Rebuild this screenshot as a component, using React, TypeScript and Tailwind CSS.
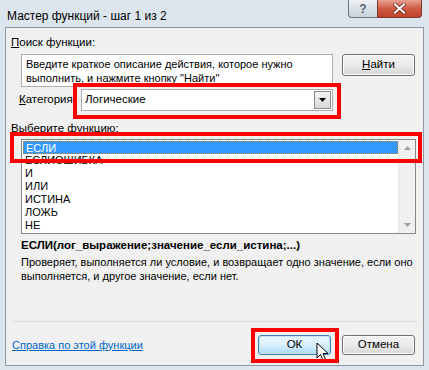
import React from "react";

const items = ["ЕСЛИ", "ЕСЛИОШИБКА", "И", "ИЛИ", "ИСТИНА", "ЛОЖЬ", "НЕ"];

function WinButton({ children, className = "" }: { children: React.ReactNode; className?: string }) {
  return (
    <div
      className={
        "flex items-center justify-center rounded-[3px] border border-[#707070] bg-gradient-to-b from-[#f2f2f2] via-[#ebebeb] to-[#d6d6d6] text-black shadow-[inset_0_0_0_1px_#fcfcfc] " +
        className
      }
    >
      {children}
    </div>
  );
}

export default function App() {
  return (
    <div
      className="relative w-[429px] h-[370px] overflow-hidden bg-[#dce4ed] text-[11.5px] text-black"
      style={{ fontFamily: '"Liberation Sans", Arial, sans-serif' }}
    >
      {/* title bar */}
      <div className="flex h-[27px] items-start">
        <div className="pl-[7px] pt-[7px] text-[12px] text-black">Мастер функций - шаг 1 из 2</div>
        <div className="ml-auto mr-[7px] flex">
          <div className="flex h-[18px] w-[29px] items-center justify-center rounded-bl-[4px] border border-r-0 border-t-0 border-[#6d7580] bg-gradient-to-b from-[#eef1f5] to-[#c9d1dc] text-[12px] font-bold text-[#5a6470]">
            ?
          </div>
          <div className="flex h-[18px] w-[45px] items-center justify-center rounded-br-[4px] border border-t-0 border-[#7a3a30] bg-gradient-to-b from-[#e8a191] via-[#cf5a42] to-[#c24128]">
            <svg width="13" height="11" viewBox="0 0 13 11">
              <path d="M2 1.5 L11 9.5 M11 1.5 L2 9.5" stroke="#5a1c12" strokeWidth="3.6" strokeLinecap="square" />
              <path d="M2 1.5 L11 9.5 M11 1.5 L2 9.5" stroke="#ffffff" strokeWidth="2.2" strokeLinecap="square" />
            </svg>
          </div>
        </div>
      </div>

      {/* client area */}
      <div className="mx-[5px] flex h-[339px] flex-col border border-[#8d98a4] bg-[#f0f0f0]">
        <div className="pl-[5px] pt-[7px] leading-[14px]">
          <span className="underline">П</span>оиск функции:
        </div>

        <div className="mt-[5px] flex items-start pl-[15px]">
          <div className="h-[33px] w-[312px] border border-[#abadb3] bg-white px-[4px] pt-[2px] text-[11px] leading-[14px]">
            Введите краткое описание действия, которое нужно выполнить, и нажмите кнопку "Найти"
          </div>
          <WinButton className="ml-[9px] h-[22px] w-[73px]">
            <span>
              <span className="underline">Н</span>айти
            </span>
          </WinButton>
        </div>

        <div className="mt-[2px] flex items-center pl-[13px]">
          <div className="w-[62px]">
            <span className="underline">К</span>атегория:
          </div>
          <div className="flex h-[22px] w-[252px] items-center border border-[#abadb3] bg-white pl-[3px]">
            <span>Логические</span>
            <div className="ml-auto mr-[1px] flex h-[18px] w-[17px] items-center justify-center border border-[#8b8b8b] bg-gradient-to-b from-[#f3f3f3] to-[#d8d8d8]">
              <svg width="7" height="4" viewBox="0 0 7 4">
                <path d="M0 0 H7 L3.5 4 Z" fill="#000" />
              </svg>
            </div>
          </div>
        </div>

        <div className="mt-[10px] pl-[5px] leading-[14px]">
          <span className="underline">В</span>ыберите функцию:
        </div>

        <div className="ml-[15px] mt-[4px] flex h-[95px] w-[395px] border border-[#828790] bg-white">
          <div className="flex-1 pl-[1px] pt-[1px] text-[11px]">
            {items.map((it, i) => (
              <div
                key={it}
                className={
                  "h-[13px] pl-[2px] leading-[13px] " +
                  (i === 0 ? "border border-dotted border-[#c08040] bg-[#3399ff] text-white leading-[11px] pl-[1px]" : "")
                }
              >
                {it}
              </div>
            ))}
          </div>
          <div className="flex w-[17px] flex-col items-center justify-between border-l border-[#e6e6e6] bg-[#f0f0f0] py-[6px]">
            <svg width="7" height="4" viewBox="0 0 7 4">
              <path d="M0 4 H7 L3.5 0 Z" fill="#a0a0a0" />
            </svg>
            <svg width="7" height="4" viewBox="0 0 7 4">
              <path d="M0 0 H7 L3.5 4 Z" fill="#a0a0a0" />
            </svg>
          </div>
        </div>

        <div className="mt-[4px] pl-[15px] text-[11.5px] font-bold leading-[14px]">ЕСЛИ(лог_выражение;значение_если_истина;...)</div>
        <div className="mt-[3px] pl-[15px] pr-[6px] text-[11px] leading-[14px]">
          Проверяет, выполняется ли условие, и возвращает одно значение, если оно выполняется, и другое значение, если нет.
        </div>

        <div className="mx-[6px] mt-auto h-px bg-[#d5dfe5]" />

        <div className="flex items-center pb-[10px] pt-[13px]">
          <div className="pl-[6px] text-[11px] text-[#0066cc] underline">Справка по этой функции</div>
          <div className="ml-auto mr-[8px] flex gap-[11px]">
            <div className="flex h-[20px] w-[73px] items-center justify-center rounded-[3px] border border-[#3c7fb1] bg-gradient-to-b from-[#eaf6fd] via-[#d9f0fc] to-[#a7d9f5] shadow-[inset_0_0_0_1px_#c4e5f6]">
              ОК
            </div>
            <WinButton className="h-[20px] w-[73px]">Отмена</WinButton>
          </div>
        </div>
      </div>

      {/* mouse cursor */}
      <svg className="absolute left-[316px] top-[342px]" width="14" height="20" viewBox="0 0 14 20">
        <path d="M1 1 L1 16 L4.5 12.5 L7 18.5 L9.5 17.5 L7 11.5 L12 11.5 Z" fill="#fff" stroke="#000" strokeWidth="1" strokeLinejoin="round" />
      </svg>

      {/* red highlight annotations */}
      <div className="absolute left-[73px] top-[83px] h-[36px] w-[268px] border-[4px] border-[#ff0000]" />
      <div className="absolute left-[10px] top-[132px] h-[31px] w-[412px] border-[4px] border-[#ff0000]" />
      <div className="absolute left-[251px] top-[328px] h-[35px] w-[88px] border-[4px] border-[#ff0000]" />
    </div>
  );
}
